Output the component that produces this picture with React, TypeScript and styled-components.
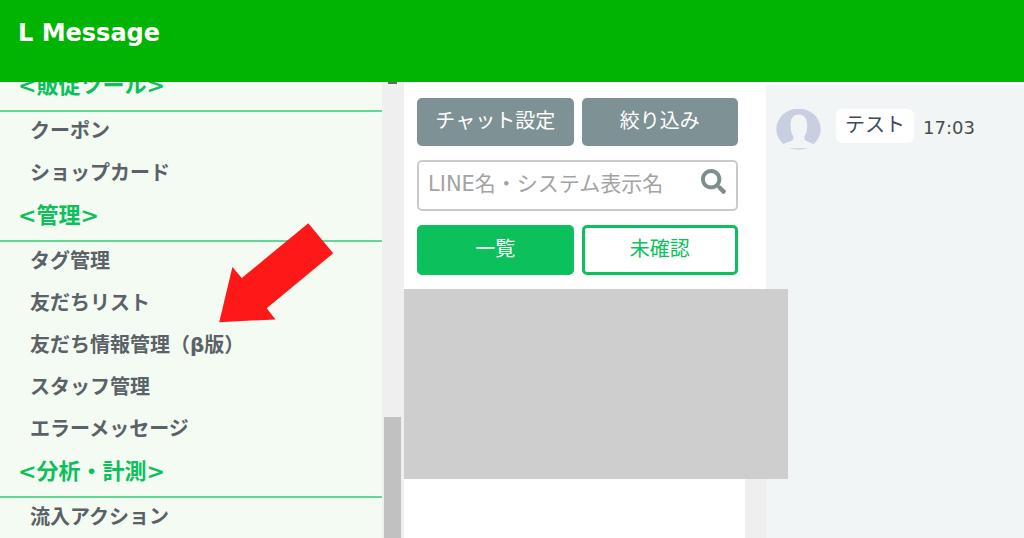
import React from "react";
import styled, { createGlobalStyle, css } from "styled-components";
import { FaSearch } from "react-icons/fa";

const GlobalStyle = createGlobalStyle`
  *, *::before, *::after { box-sizing: border-box; }
  body {
    margin: 0;
    background: #ffffff;
    font-family: "DejaVu Sans", "Noto Sans CJK JP", sans-serif;
    font-size: 20px;
  }
  button, input { font-family: inherit; }
`;

const Page = styled.div`
  display: flex;
  flex-direction: column;
  height: 100vh;
  overflow: hidden;
`;

const Header = styled.header`
  flex: none;
  position: relative;
  z-index: 1;
  height: 82px;
  padding: 17px 18px;
  background: #02b402;
`;

const Brand = styled.h1`
  margin: 0;
  font-size: 24px;
  line-height: 32px;
  font-weight: 700;
  color: #ffffff;
`;

const Body = styled.div`
  flex: 1;
  min-height: 0;
  display: flex;
`;

const Sidebar = styled.aside`
  flex: none;
  width: 404px;
  display: flex;
  position: relative;
`;

const Menu = styled.nav`
  flex: 1;
  overflow: hidden;
  background: #f3fbf3;
`;

const MenuScroll = styled.div`
  margin-top: -16px;
`;

const MenuHeading = styled.h2`
  margin: 0;
  padding: 0 18px 4px;
  border-bottom: 2px solid #62d896;
  font-size: 22px;
  line-height: 40px;
  font-weight: 700;
  color: #0cc05c;
  white-space: nowrap;
`;

const MenuList = styled.ul`
  margin: 0;
  padding: 0;
  list-style: none;
`;

const MenuLink = styled.a`
  display: block;
  padding: 0 30px 4px;
  line-height: 38px;
  font-weight: 700;
  color: #5b6267;
  text-decoration: none;
  white-space: nowrap;
`;

const ScrollTrack = styled.div`
  flex: none;
  width: 22px;
  display: flex;
  flex-direction: column;
  justify-content: space-between;
  align-items: center;
  padding-right: 1px;
  background: #efefef;
`;

const ScrollArrow = styled.div`
  width: 9px;
  height: 2px;
  background: #5c6e5c;
`;

const ScrollThumb = styled.div`
  width: 17px;
  height: 121px;
  background: #c1c1c1;
`;

const Pointer = styled.svg`
  position: absolute;
  left: 219px;
  top: 141px;
`;

const Friends = styled.section`
  flex: none;
  width: 362px;
  display: flex;
  flex-direction: column;
  background: #ffffff;
`;

const Controls = styled.div`
  display: grid;
  grid-template-columns: 1fr 1fr;
  gap: 14px 8px;
  padding: 16px 28px 14px 13px;
`;

const buttonColors = {
  gray: css`
    height: 48px;
    border-color: #7e9194;
    background: #7e9194;
    color: #ffffff;
  `,
  solid: css`
    height: 50px;
    border-color: #0cc05c;
    background: #0cc05c;
    color: #ffffff;
  `,
  outline: css`
    height: 50px;
    border-color: #0cc05c;
    background: #ffffff;
    color: #0cc05c;
  `,
};

const Button = styled.button<{ $kind: keyof typeof buttonColors }>`
  padding: 0 0 2px;
  border: 3px solid;
  border-radius: 5px;
  font-size: 20px;
  line-height: 28px;
  white-space: nowrap;
  ${({ $kind }) => buttonColors[$kind]}
`;

const SearchBox = styled.div`
  grid-column: 1 / -1;
  display: flex;
  align-items: center;
  height: 51px;
  padding: 0 10px 4px 9px;
  border: 2px solid #cacaca;
  border-radius: 5px;
  color: #7f8c8d;
`;

const SearchInput = styled.input`
  flex: 1;
  min-width: 0;
  height: 40px;
  padding: 0;
  border: 0;
  outline: 0;
  background: transparent;
  font-size: 21px;
  &::placeholder {
    color: #a3a3a3;
    opacity: 1;
  }
`;

const SearchButton = styled.button`
  display: flex;
  padding: 0 0 4px;
  border: 0;
  background: transparent;
  color: inherit;
`;

const FriendList = styled.div`
  flex: 1;
  display: flex;
  flex-direction: column;
  position: relative;
`;

const Redacted = styled.div`
  flex: none;
  position: relative;
  height: 190px;
  margin-right: -22px;
  background: #cecece;
`;

const ListTrack = styled.div`
  flex: 1;
  width: 21px;
  align-self: flex-end;
  background: #efefef;
`;

const Chat = styled.main`
  flex: 1;
  min-width: 0;
  margin-top: 3px;
  padding: 24px 10px;
  background: #f1f5f6;
`;

const Message = styled.div`
  display: flex;
  align-items: flex-start;
`;

const Bubble = styled.p`
  margin: 0 9px 0 15px;
  padding: 0 9px 2px;
  border-radius: 6px;
  background: #ffffff;
  line-height: 32px;
  color: #3f4a59;
  white-space: nowrap;
`;

const Time = styled.time`
  padding-top: 3px;
  font-size: 18px;
  line-height: 32px;
  color: #4a4a4a;
`;

const sections = [
  { title: "<販促ツール>", items: ["クーポン", "ショップカード"] },
  {
    title: "<管理>",
    items: ["タグ管理", "友だちリスト", "友だち情報管理（β版）", "スタッフ管理", "エラーメッセージ"],
  },
  { title: "<分析・計測>", items: ["流入アクション"] },
];

function Avatar() {
  return (
    <svg width="45" height="41" viewBox="0 0 45 41" aria-hidden="true">
      <path
        d="M7.5 35.2A22.2 20.5 0 1 1 37.5 35.2C34.5 33 29 32.5 28.5 30V27C30.5 24.5 31.3 21 31.2 16C31 9 28 5.5 22.8 5.5S14.6 9 14.5 16C14.5 21 15.3 24.5 17.3 27V30C16.5 32.5 10.5 33 7.5 35.2Z"
        fill="#c9cfe1"
      />
      <path d="M13 39Q22.5 39.6 32 39Q22.5 42.4 13 39Z" fill="#c9cfe1" />
    </svg>
  );
}

export default function App() {
  return (
    <Page>
      <GlobalStyle />
      <Header>
        <Brand>L Message</Brand>
      </Header>
      <Body>
        <Sidebar>
          <Menu>
            <MenuScroll>
              {sections.map((section) => (
                <React.Fragment key={section.title}>
                  <MenuHeading>{section.title}</MenuHeading>
                  <MenuList>
                    {section.items.map((item) => (
                      <li key={item}>
                        <MenuLink href="#">{item}</MenuLink>
                      </li>
                    ))}
                  </MenuList>
                </React.Fragment>
              ))}
            </MenuScroll>
          </Menu>
          <ScrollTrack>
            <ScrollArrow />
            <ScrollThumb />
          </ScrollTrack>
          <Pointer width="115" height="100" viewBox="219 223 115 100" aria-hidden="true">
            <path
              d="M219.2 322.2L232.4 267L241.8 278L308.3 223.2L333.2 253.3L266.7 308.3L275.5 319.4Z"
              fill="#ff1818"
            />
          </Pointer>
        </Sidebar>
        <Friends>
          <Controls>
            <Button $kind="gray">チャット設定</Button>
            <Button $kind="gray">絞り込み</Button>
            <SearchBox>
              <SearchInput type="text" aria-label="LINE名・システム表示名" placeholder="LINE名・システム表示名" />
              <SearchButton aria-label="検索">
                <FaSearch size={25} />
              </SearchButton>
            </SearchBox>
            <Button $kind="solid">一覧</Button>
            <Button $kind="outline">未確認</Button>
          </Controls>
          <FriendList>
            <Redacted />
            <ListTrack />
          </FriendList>
        </Friends>
        <Chat>
          <Message>
            <Avatar />
            <Bubble>テスト</Bubble>
            <Time>17:03</Time>
          </Message>
        </Chat>
      </Body>
    </Page>
  );
}
